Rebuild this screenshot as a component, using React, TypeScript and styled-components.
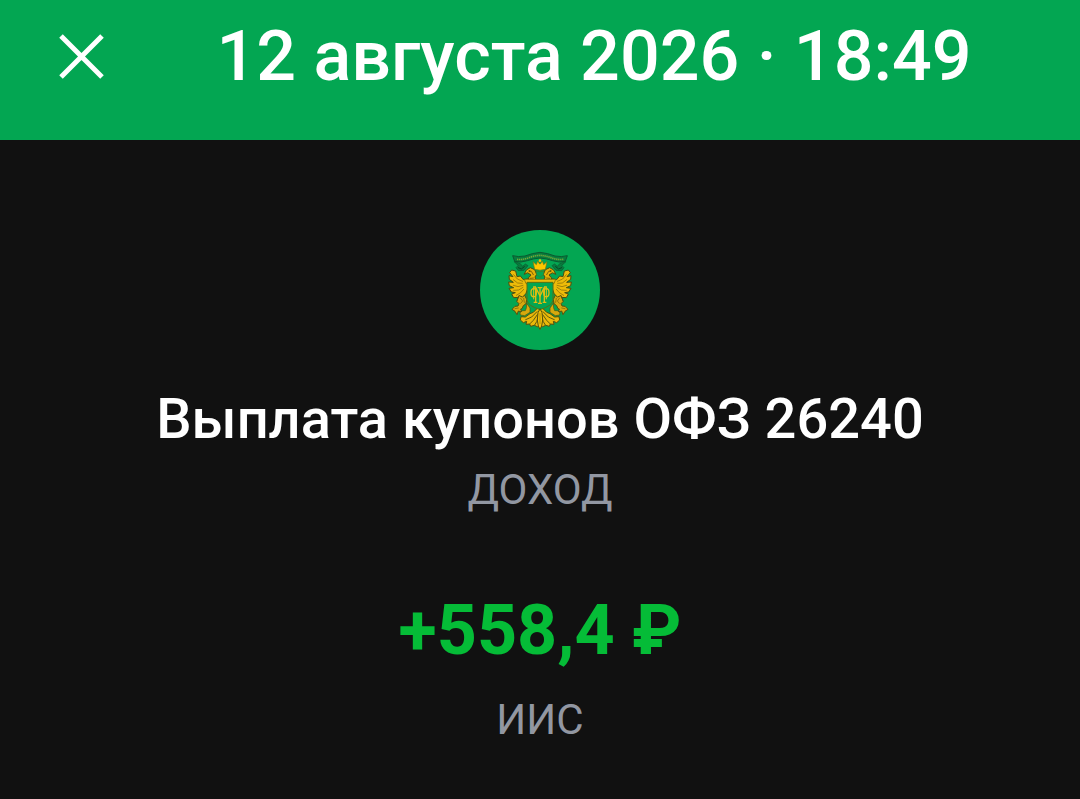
import React from 'react';
import styled, { createGlobalStyle } from 'styled-components';

const App = () => {
  return (
    <>
      <GlobalStyle />
      <Wrapper>
        <Header>
          <CloseButton type="button" aria-label="Закрыть">
            <CloseIcon />
          </CloseButton>
          <HeaderTitle>12 августа 2026 · 18:49</HeaderTitle>
        </Header>
        <Content>
          <Emblem />
          <OperationTitle>Выплата купонов ОФЗ 26240</OperationTitle>
          <Caption>ДОХОД</Caption>
          <Amount>+558,4 ₽</Amount>
          <Caption>ИИС</Caption>
        </Content>
      </Wrapper>
    </>
  );
};

const CloseIcon = () => (
  <svg width="52" height="52" viewBox="0 0 52 52" fill="none" aria-hidden="true">
    <path d="M5 6L46 47M46 6L5 47" stroke="#fff" strokeWidth="5" />
  </svg>
);

// one half of the crest, the other one is mirrored
const CrestHalf = () => (
  <g strokeLinejoin="round" strokeLinecap="round">
    {/* ribbon end */}
    <path
      d="M133 125L150 130L158 139L166 132L174 137L162 151L145 152L138 143L144 137Z"
      fill="#087c3d"
      stroke="#0b5930"
      strokeWidth="2"
    />
    <path d="M145 143L154 147L163 140" fill="none" stroke="#064723" strokeWidth="3" />

    {/* wing */}
    <path
      d="M176 176L160 179L151 168L141 170L137 153L125 150L119 158L129 170L117 167L118 178L130 187L116 186L118 197L131 203L117 205L124 216L136 218L125 222L131 233L146 232L142 242L157 234L168 220L173 206L172 190L178 186Z"
      fill="#edbb09"
      stroke="#4c4c10"
      strokeWidth="3"
    />
    <path
      d="M131 164L142 177L158 184M130 179L143 189L157 190M130 196L144 200L159 196M131 211L146 210L159 202M139 226L152 218L161 208"
      fill="none"
      stroke="#7d650b"
      strokeWidth="2"
    />

    {/* eagle head and neck */}
    <path
      d="M163 162L169 150L181 143L194 149L200 163L195 171L199 181L176 182L176 173L183 165L174 159Z"
      fill="#e3b008"
      stroke="#4c4c10"
      strokeWidth="3"
    />
    <path d="M176 153L184 154L190 164M181 175L190 174" fill="none" stroke="#806409" strokeWidth="3" />
    <circle cx="179" cy="153" r="2" fill="#35450d" />

    {/* leg with claws */}
    <path
      d="M148 227L157 231L164 226L170 238L168 251L160 257L156 266L152 267L155 276L145 273L141 284L135 274L126 268L135 259L144 258L147 251L141 245Z"
      fill="#d6a90d"
      stroke="#55500e"
      strokeWidth="3"
    />
    <path
      d="M152 235L158 243L152 250M161 235L163 247M135 266L145 264"
      fill="none"
      stroke="#745e0b"
      strokeWidth="2"
    />
    <path
      d="M170 250L180 264L180 277L164 287L151 285L150 278L158 272L166 272L169 264Z"
      fill="#d7a90d"
      stroke="#55500e"
      strokeWidth="2"
    />

    {/* tail */}
    <path
      d="M204 263L190 277L180 281L166 291L153 290L151 300L160 308L170 304L168 313L179 312L182 319L193 316L202 320L210 318V263Z"
      fill="#eab80a"
      stroke="#55500e"
      strokeWidth="3"
    />
    <path
      d="M201 275L185 291L167 299M202 284L190 301L180 311M205 290L200 305L194 315"
      fill="none"
      stroke="#5f5a0d"
      strokeWidth="3"
    />
  </g>
);

const Emblem = () => (
  <EmblemIcon viewBox="30 30 360 360" role="img" aria-label="Минфин России">
    <circle cx="210" cy="210" r="180" fill="#03a652" />
    <CrestHalf />
    <g transform="translate(420 0) scale(-1 1)">
      <CrestHalf />
    </g>

    {/* ribbon */}
    <path
      d="M128 107Q145 112 165 108Q188 99 210 97Q232 99 255 108Q275 112 292 107L286 124Q267 129 248 122Q228 115 210 114Q192 115 172 122Q153 129 134 124Z"
      fill="#087c3d"
      stroke="#0b5930"
      strokeWidth="3"
      strokeLinejoin="round"
    />
    <path
      d="M141 118Q157 120 174 114Q192 107 210 106Q228 107 246 114Q263 120 280 118"
      fill="none"
      stroke="#74a638"
      strokeWidth="5"
      strokeDasharray="4 2"
    />

    {/* crown */}
    <path
      d="M194 148L189 125L199 134L203 123L209 132L211 132L217 123L221 134L231 125L226 148Q210 153 194 148Z"
      fill="#ffc600"
      stroke="#79720d"
      strokeWidth="2"
    />
    <circle cx="210" cy="122" r="4" fill="#f6c004" />
    <path d="M198 153Q210 158 222 153L220 165L210 172L200 165Z" fill="#03a652" stroke="#4c7b20" strokeWidth="2" />

    {/* shield */}
    <path d="M163 178H257L252 191H168Z" fill="#edbb09" stroke="#6d610c" strokeWidth="2" />
    <path
      d="M171 187H249V241Q247 257 210 269Q173 257 171 241Z"
      fill="#03a652"
      stroke="#567014"
      strokeWidth="3"
    />

    {/* monogram */}
    <g fill="none" stroke="#e1bd12" strokeWidth="4">
      <path d="M197 246V202L210 228L223 202V246" />
      <path d="M210 202V250M203 203H217M204 250H216" />
      <path d="M191 247H202M218 247H229M190 201H198M222 201H230" />
      <ellipse cx="191" cy="218" rx="8" ry="12" />
      <ellipse cx="229" cy="218" rx="8" ry="12" />
      <path d="M191 200V238M229 200V238" strokeWidth="3" />
    </g>

    {/* central tail feather */}
    <path
      d="M210 266L216 278L218 300L215 318L210 328L205 318L202 300L204 278Z"
      fill="#f3c006"
      stroke="#55500e"
      strokeWidth="3"
    />
    <path d="M210 279V312" stroke="#94770a" strokeWidth="2" />
  </EmblemIcon>
);

const GlobalStyle = createGlobalStyle`
  * {
    box-sizing: border-box;
  }
  body {
    margin: 0;
    background-color: #111111;
    font-family: Roboto, 'Noto Sans', sans-serif;
  }
`;
const Wrapper = styled.div`
  min-height: 100vh;
  background-color: #111111;
  border-bottom: 1px solid #000000;
`;
const Header = styled.header`
  display: flex;
  align-items: center;
  height: 140px;
  padding: 0 0 28px 56px;
  background-color: #03a652;
`;
const CloseButton = styled.button`
  display: flex;
  padding: 0;
  border: none;
  background: none;
  cursor: pointer;
`;
const HeaderTitle = styled.h1`
  flex: 1;
  margin: 0;
  color: #ffffff;
  font-size: 70px;
  font-weight: 500;
  line-height: 80px;
  text-align: center;
`;
const Content = styled.main`
  display: flex;
  flex-direction: column;
  align-items: center;
  padding: 90px 24px 48px;
  text-align: center;
`;
const EmblemIcon = styled.svg`
  width: 120px;
  height: 120px;
`;
const OperationTitle = styled.h2`
  margin: 37px 0 7px;
  color: #ffffff;
  font-size: 56px;
  font-weight: 500;
  line-height: 64px;
`;
const Caption = styled.p`
  margin: 0;
  color: #9297a2;
  font-size: 42px;
  font-weight: 400;
  line-height: 64px;
`;
const Amount = styled.p`
  margin: 68px 0 18px;
  color: #05bc37;
  font-size: 70px;
  font-weight: 700;
  line-height: 80px;
`;

export default App;
